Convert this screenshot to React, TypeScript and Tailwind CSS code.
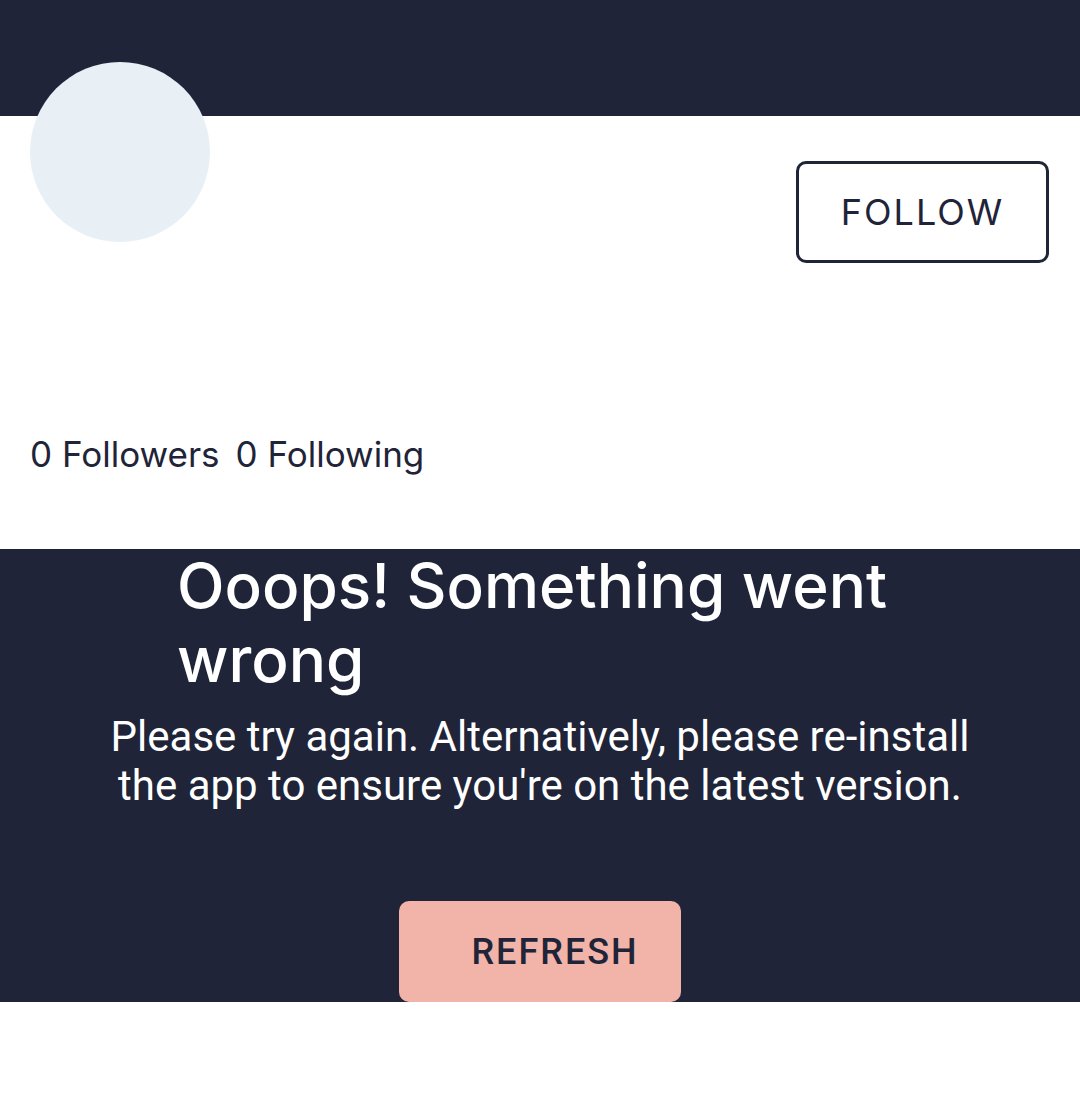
import React from 'react';

const App: React.FC = () => {
  return (
    <div className="w-[1080px] h-[1120px] bg-white flex flex-col" style={{ fontFamily: 'Inter, "Open Sans", sans-serif' }}>
      <div className="h-[116px] bg-[#1f2438] shrink-0" />
      <div className="h-[433px] shrink-0 flex flex-col px-[30px]">
        <div className="flex justify-between items-start">
          <div className="w-[180px] h-[180px] rounded-full bg-[#e8f0f5] -mt-[54px]" />
          <button className="mt-[45px] mr-[1px] w-[253px] h-[102px] rounded-[10px] border-[3px] border-[#1f2438] text-[#1f2438] text-[36px] tracking-[2px]">
            FOLLOW
          </button>
        </div>
        <div className="mt-[166px] flex gap-[16px] text-[35px] leading-[50px] text-[#1f2438]">
          <span>0 Followers</span>
          <span>0 Following</span>
        </div>
      </div>
      <div className="h-[453px] shrink-0 bg-[#1f2438] flex flex-col items-center">
        <h1 className="w-[726px] text-white text-[62px] leading-[74px] font-medium">
          Ooops! Something went wrong
        </h1>
        <p className="mt-[15px] text-center text-white text-[42px] leading-[49px]" style={{ fontFamily: 'Roboto, sans-serif' }}>
          Please try again. Alternatively, please re-install
          <br />
          the app to ensure you're on the latest version.
        </p>
        <button
          className="mt-[91px] w-[282px] h-[101px] rounded-[10px] bg-[#f2b3a8] text-[#1f2438] text-[36px] font-medium tracking-[2px] pl-[30px]"
          style={{ fontFamily: 'Roboto, sans-serif' }}
        >
          REFRESH
        </button>
      </div>
      <div className="flex-1 bg-white" />
    </div>
  );
};

export default App;
